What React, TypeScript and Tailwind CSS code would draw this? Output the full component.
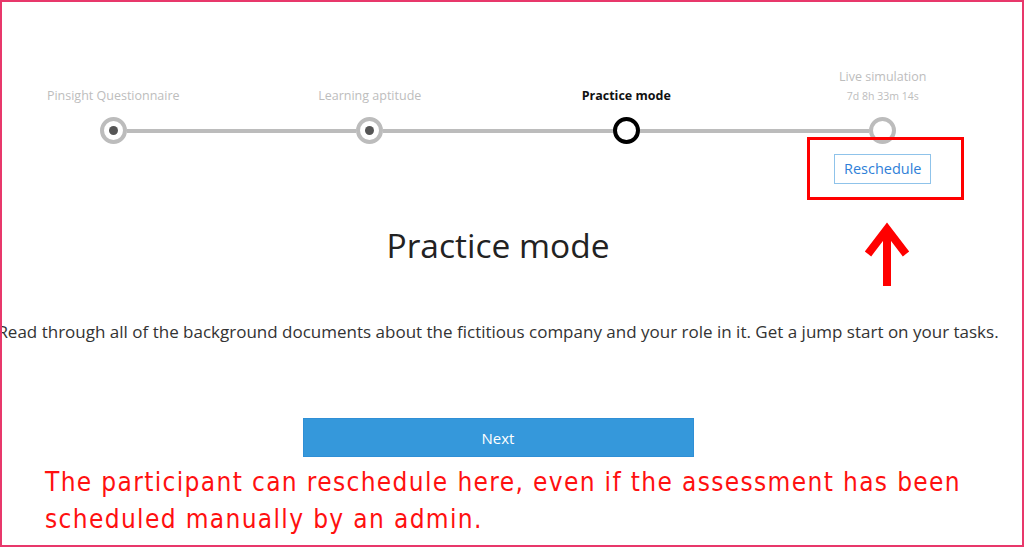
import React from "react";

type Step = { label: string; sub?: string; state: "done" | "active" | "todo" };

const steps: Step[] = [
  { label: "Pinsight Questionnaire", state: "done" },
  { label: "Learning aptitude", state: "done" },
  { label: "Practice mode", state: "active" },
  { label: "Live simulation", sub: "7d 8h 33m 14s", state: "todo" },
];

function Circle({ state }: { state: Step["state"] }) {
  if (state === "done")
    return (
      <div className="w-[27px] h-[27px] rounded-full border-[4px] border-[#bcbcbc] bg-white flex items-center justify-center shrink-0">
        <div className="w-[9px] h-[9px] rounded-full bg-[#555555]" />
      </div>
    );
  if (state === "active")
    return <div className="w-[27px] h-[27px] rounded-full border-[4px] border-black bg-white shrink-0" />;
  return <div className="w-[27px] h-[27px] rounded-full border-[4px] border-[#bcbcbc] bg-white shrink-0" />;
}

export default function App() {
  const font = { fontFamily: '"Open Sans", "Noto Sans", sans-serif' };
  return (
    <div className="relative w-[1024px] h-[547px] overflow-hidden bg-white border-2 border-[#e8386b]">
      <div className="w-[1024px] ml-[-16px] flex flex-col items-center" style={font}>
        <div className="flex w-[1026px] pt-[63px]">
          {steps.map((s, i) => (
            <div key={i} className="w-[256.5px] flex flex-col items-center">
              <div className="h-[40px] flex flex-col items-center justify-end mb-[12px]">
                {s.sub ? (
                  <>
                    <div className="text-[12.5px] leading-[18px] text-[#bdbdbd] mb-[1px]">{s.label}</div>
                    <div className="text-[10.5px] leading-[18px] text-[#bdbdbd]">{s.sub}</div>
                  </>
                ) : (
                  <div
                    className={
                      s.state === "active"
                        ? "text-[12.5px] leading-[18px] font-bold text-[#111111]"
                        : "text-[12.5px] leading-[18px] text-[#bdbdbd]"
                    }
                  >
                    {s.label}
                  </div>
                )}
              </div>
              <div className="w-full h-[27px] flex items-center">
                <div className={i === 0 ? "flex-1 h-[4px]" : "flex-1 h-[4px] bg-[#bcbcbc]"} />
                <Circle state={s.state} />
                <div className={i === steps.length - 1 ? "flex-1 h-[4px]" : "flex-1 h-[4px] bg-[#bcbcbc]"} />
              </div>
              {s.sub && (
                <button className="mt-[10px] w-[97px] h-[30px] border border-[#8fc3ea] text-[14.5px] text-[#2f7fd8] bg-white">
                  Reschedule
                </button>
              )}
            </div>
          ))}
        </div>
        <h1 className="mt-[41px] text-[33.5px] leading-[40px] text-[#222222]">Practice mode</h1>
        <p className="mt-[55px] text-[17px] leading-[24px] text-[#333333] whitespace-nowrap">
          Read through all of the background documents about the fictitious company and your role in it. Get a jump start on your tasks.
        </p>
        <button className="mt-[74px] w-[391px] h-[39px] pt-[2px] bg-[#3598db] border border-[#2f8fd6] text-white text-[15px]">
          Next
        </button>
      </div>
      <div
        className="mt-[7px] pl-[43px] text-[26px] leading-[37px] text-[#ff1010] tracking-[1.35px]"
        style={{ fontFamily: '"DejaVu Sans Condensed", "DejaVu Sans", sans-serif' }}
      >
        The participant can reschedule here, even if the assessment has been
        <br />
        scheduled manually by an admin.
      </div>

      <div className="absolute left-[805px] top-[135px] w-[157px] h-[63px] border-[3px] border-[#ff0000]" />
      <svg className="absolute left-[858px] top-[216px]" width="56" height="72" viewBox="858 216 56 72">
        <polyline points="866,252 885,227 904,252" fill="none" stroke="#ff0000" strokeWidth="8" strokeLinejoin="miter" />
        <line x1="885" y1="228" x2="885" y2="284" stroke="#ff0000" strokeWidth="8" />
      </svg>
    </div>
  );
}
